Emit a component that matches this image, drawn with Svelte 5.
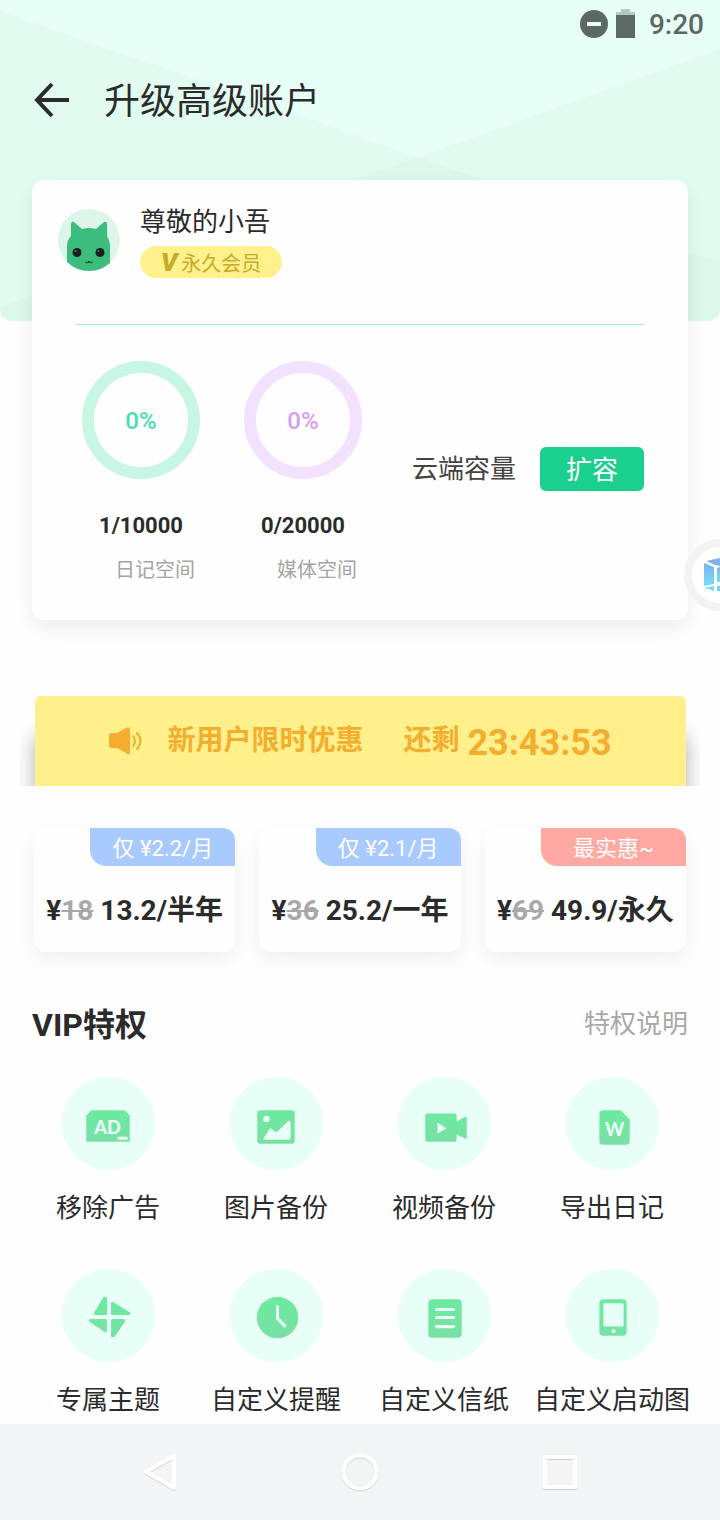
<script>
  const plans = [
    { tag: '仅 ¥2.2/月', old: '18', price: '13.2/半年', hot: false },
    { tag: '仅 ¥2.1/月', old: '36', price: '25.2/一年', hot: false },
    { tag: '最实惠~', old: '69', price: '49.9/永久', hot: true }
  ];
  const usage = [
    { percent: '0%', count: '1/10000', label: '日记空间', kind: 'diary' },
    { percent: '0%', count: '0/20000', label: '媒体空间', kind: 'media' }
  ];
  const perks = [
    { icon: 'ad', label: '移除广告' },
    { icon: 'image', label: '图片备份' },
    { icon: 'video', label: '视频备份' },
    { icon: 'word', label: '导出日记' },
    { icon: 'theme', label: '专属主题' },
    { icon: 'clock', label: '自定义提醒' },
    { icon: 'paper', label: '自定义信纸' },
    { icon: 'phone', label: '自定义启动图' }
  ];
</script>

<div class="page">
  <svg class="backdrop" viewBox="0 0 720 321" preserveAspectRatio="none" aria-hidden="true">
    <rect width="720" height="321" fill="#e8fff8" />
    <path d="M0 11L720 263V321H0Z" fill="#c8eed8" fill-opacity=".22" />
    <path d="M720 49L0 307V321H720Z" fill="#c8eed8" fill-opacity=".22" />
  </svg>

  <header>
    <div class="status">
      <svg width="60" height="32" viewBox="0 0 60 32" aria-hidden="true">
        <circle cx="16" cy="16" r="14" fill="#5c6862" />
        <rect x="9" y="14" width="14" height="4" fill="#e8fff8" />
        <path d="M43 1h9v3h5v3H38V4h5z" fill="#b5c9c0" />
        <path d="M38 7h19v23H38z" fill="#5c6862" />
      </svg>
      <span>9:20</span>
    </div>
    <div class="titlebar">
      <button class="back" aria-label="返回">
        <svg width="36" height="36" viewBox="0 0 36 36" fill="none" stroke="#2b2b2b" stroke-width="4">
          <path d="M19 2L4 18L19 34M4 18H36" />
        </svg>
      </button>
      <h1>升级高级账户</h1>
    </div>
  </header>

  <main>
    <section class="account">
      <div class="user">
        <svg class="avatar" viewBox="0 0 62 62" aria-hidden="true">
          <defs><clipPath id="face"><circle cx="31" cy="31" r="31" /></clipPath></defs>
          <circle cx="31" cy="31" r="31" fill="#e0f5ea" />
          <g clip-path="url(#face)">
            <path d="M9 62V37Q9 31 13 27V15Q13 12 16 13L24 20Q31 18 38 20L46 13Q49 12 49 15V27Q52 32 52 37V62Z" fill="#3dbd7d" />
          </g>
          <circle cx="19" cy="43.500" r="4.500" fill="#17201b" />
          <circle cx="42" cy="43.500" r="4.500" fill="#17201b" />
          <circle cx="17.500" cy="42" r="1" fill="#577" />
          <circle cx="40.500" cy="42" r="1" fill="#577" />
          <path d="M29.500 52h3l-1.500 1.500z" fill="#222" />
          <path d="M27 53q2 2 4 0q2 2 4 0" fill="none" stroke="#222" stroke-width=".8" />
        </svg>
        <div>
          <h2>尊敬的小吾</h2>
          <p class="badge"><b>V</b><span>永久会员</span></p>
        </div>
      </div>
      <div class="storage">
        {#each usage as item}
          <div class="usage {item.kind}">
            <div class="ring">{item.percent}</div>
            <strong>{item.count}</strong>
            <small>{item.label}</small>
          </div>
        {/each}
        <div class="cloud">
          <span>云端容量</span>
          <button>扩容</button>
        </div>
      </div>
    </section>

    <div class="promo-wrap">
      <section class="promo">
        <svg width="34" height="28" viewBox="0 0 34 28" aria-hidden="true">
          <path d="M3 6H8L17 1Q21 -1 21 3V25Q21 29 17 26L8 21H3Q0 21 0 18V9Q0 6 3 6Z" fill="#f4ad2e" />
          <path d="M24 9Q28 14 24 19M28 6Q35 14 28 22" fill="none" stroke="#f4ad2e" stroke-width="2" stroke-linecap="round" />
        </svg>
        <span class="offer">新用户限时优惠</span>
        <span>还剩</span>
        <time>23:43:53</time>
      </section>
    </div>

    <section class="plans">
      {#each plans as plan}
        <button class="plan">
          <span class="tag" class:hot={plan.hot}>{plan.tag}</span>
          <span class="price">¥<del>{plan.old}</del> {plan.price}</span>
        </button>
      {/each}
    </section>

    <div class="heading">
      <h2>VIP特权</h2>
      <a href="#perks">特权说明</a>
    </div>

    <ul class="perks" id="perks">
      {#each perks as perk}
        <li>
          <svg viewBox="0 0 92 92" aria-hidden="true">
            <defs>
              <linearGradient id="g-{perk.icon}" gradientUnits="userSpaceOnUse" x1="0" y1="34" x2="0" y2="70">
                <stop offset="0" stop-color="#6de9a0" />
                <stop offset="1" stop-color="#7adfa5" />
              </linearGradient>
            </defs>
            <circle cx="46" cy="46" r="46" fill="#e8fff8" />
            <g fill="url(#g-{perk.icon})">
              {#if perk.icon === 'ad'}
                <path d="M29 33H62L67 38V64H24V38Z" stroke-linejoin="round" />
                <text x="45" y="56" text-anchor="middle" class="glyph">AD</text>
                <rect x="55" y="59" width="10" height="3" rx="1" fill="#e8fff8" />
              {:else if perk.icon === 'image'}
                <rect x="27" y="33" width="37" height="33" rx="3" />
                <circle cx="36" cy="41.500" r="3.200" fill="#e8fff8" />
                <path d="M33 61L39 52Q40 50 42 52L46 55L57 44Q60 42 60 46V60Q60 62 58 62H34Q33 62 33 61Z" fill="#e8fff8" />
              {:else if perk.icon === 'video'}
                <path d="M29 36H56Q58 36 58 38V44L67 39Q68 39 68 40V60Q68 62 67 61L58 57V62Q58 64 56 64H29Q27 64 27 62V38Q27 36 29 36Z" />
                <path d="M39 45V56L48 51Z" fill="#e8fff8" />
              {:else if perk.icon === 'word'}
                <path d="M37 33H54L63 42V63Q63 67 59 67H37Q33 67 33 63V37Q33 33 37 33Z" />
                <text x="48" y="58" text-anchor="middle" class="glyph">W</text>
              {:else if perk.icon === 'theme'}
                <g stroke="url(#g-theme)" stroke-width="3" stroke-linejoin="round">
                  <path d="M43 29V44H33L42 29Z" />
                  <path d="M50 34V44H66Z" />
                  <path d="M43 61V51H28Z" />
                  <path d="M50 66V51H61L51 66Z" />
                </g>
              {:else if perk.icon === 'clock'}
                <circle cx="47" cy="48" r="20.500" />
                <path d="M47 37V49L54 56" fill="none" stroke="#e8fff8" stroke-width="3" stroke-linecap="round" stroke-linejoin="round" />
              {:else if perk.icon === 'paper'}
                <rect x="30" y="30" width="33" height="38" rx="4" />
                <path d="M38 40H55M38 48H55M38 57H55" stroke="#e8fff8" stroke-width="3" stroke-linecap="round" />
              {:else}
                <rect x="33" y="30" width="27" height="36" rx="4" />
                <rect x="37" y="34" width="20" height="23" rx="1" fill="#e8fff8" />
                <circle cx="47" cy="61.500" r="2" fill="#e8fff8" />
              {/if}
            </g>
          </svg>
          <span>{perk.label}</span>
        </li>
      {/each}
    </ul>
  </main>

  <nav>
    <button aria-label="后退">
      <svg viewBox="0 0 40 40"><path d="M34 4V36L6 20Z" /></svg>
    </button>
    <button aria-label="主页">
      <svg viewBox="0 0 40 40"><circle cx="20" cy="20" r="16.500" /></svg>
    </button>
    <button aria-label="最近任务">
      <svg viewBox="0 0 40 40"><rect x="5" y="5" width="30" height="30" /></svg>
    </button>
  </nav>

  <button class="floating" aria-label="悬浮工具">
    <svg width="72" height="72" viewBox="0 0 72 72">
      <defs>
        <linearGradient id="cube" x1="0" y1="0" x2="0" y2="1">
          <stop offset="0" stop-color="#76b4ee" />
          <stop offset="1" stop-color="#7addf8" />
        </linearGradient>
      </defs>
      <circle cx="36" cy="36" r="32" fill="#fff" stroke="#f3f3f3" stroke-width="8" />
      <path d="M20 24L30 28V45L20 47Z" fill="url(#cube)" />
      <path d="M22 22L36 19L50 22L36 27L31 26Z" fill="#82b2ed" />
      <path d="M33 29L36 28L50 25V44L36 43L33 43Z" fill="url(#cube)" />
      <path d="M20 49L30 47V52L25 50ZM33 47L50 46V48L36 52L33 52Z" fill="#70d9ee" />
    </svg>
  </button>
</div>

<style>
  :global(body) {
    margin: 0;
    background: #fefefe;
  }
  .page {
    position: relative;
    display: flex;
    flex-direction: column;
    min-height: 100vh;
    overflow: hidden;
    font-family: Roboto, "Noto Sans CJK SC", sans-serif;
    color: #2b2b2b;
  }
  h1, h2, p, ul {
    margin: 0;
    padding: 0;
    font-weight: 400;
  }
  button {
    border: 0;
    padding: 0;
    background: none;
    font: inherit;
    color: inherit;
    cursor: pointer;
  }
  svg {
    display: block;
  }
  .backdrop {
    position: absolute;
    top: 0;
    left: 0;
    width: 100%;
    height: 321px;
    border-radius: 0 0 12px 12px;
  }
  header {
    position: relative;
  }
  .status {
    display: flex;
    align-items: center;
    justify-content: flex-end;
    gap: 11px;
    height: 48px;
    padding-right: 16px;
    font-size: 28px;
    font-weight: 500;
    line-height: 32px;
    color: #5c6862;
  }
  .status span {
    padding-top: 2px;
  }
  .titlebar {
    display: flex;
    align-items: center;
    gap: 35px;
    height: 104px;
    padding-left: 33px;
  }
  h1 {
    padding-top: 4px;
    font-size: 36px;
    line-height: 48px;
  }
  main {
    position: relative;
    flex: 1;
    padding: 28px 32px 6px;
  }
  .account {
    padding: 26px 26px 36px;
    border-radius: 12px;
    background: #fefefe;
    box-shadow: 0 8px 20px rgba(0, 0, 0, 0.07);
  }
  .user {
    display: flex;
    gap: 20px;
    height: 118px;
  }
  .avatar {
    width: 62px;
    height: 62px;
    margin-top: 3px;
  }
  .user h2 {
    font-size: 26px;
    line-height: 32px;
  }
  .badge {
    display: flex;
    align-items: center;
    justify-content: center;
    gap: 4px;
    width: 142px;
    height: 32px;
    margin-top: 8px;
    border-radius: 16px;
    background: #fff18c;
    font-size: 20px;
    line-height: 32px;
    color: #c9a92a;
  }
  .badge b {
    font-size: 26px;
    font-style: italic;
    font-weight: 900;
  }
  .badge span {
    padding-top: 4px;
  }
  .storage {
    display: flex;
    margin: 0 18px;
    padding: 36px 0 0 6px;
    border-top: 1px solid #a6e8d0;
  }
  .usage {
    display: flex;
    flex-direction: column;
    align-items: center;
    width: 118px;
    margin-right: 44px;
  }
  .ring {
    display: flex;
    align-items: center;
    justify-content: center;
    box-sizing: border-box;
    width: 118px;
    height: 118px;
    padding-top: 2px;
    border: 12px solid #c7f6e5;
    border-radius: 50%;
    font-size: 24px;
    font-weight: 500;
    color: #4cdcb0;
  }
  .media .ring {
    border-color: #f3e2ff;
    color: #d79df5;
  }
  .usage strong {
    margin-top: 33px;
    font-size: 22px;
    line-height: 28px;
  }
  .usage small {
    margin-top: 16px;
    padding-left: 28px;
    font-size: 20px;
    line-height: 28px;
    color: #a5a5a5;
  }
  .cloud {
    display: flex;
    align-items: center;
    gap: 24px;
    height: 44px;
    margin: 86px 0 0 auto;
    font-size: 26px;
    line-height: 44px;
    color: #444;
    white-space: nowrap;
  }
  .cloud button {
    width: 104px;
    height: 44px;
    border-radius: 6px;
    background: #1bcf8e;
    line-height: 46px;
    color: #fff;
  }
  .promo-wrap {
    margin: 60px -12px 0;
    padding: 16px 14px 0 15px;
    overflow: hidden;
  }
  .promo {
    display: flex;
    align-items: center;
    justify-content: center;
    height: 90px;
    border-radius: 6px 6px 0 0;
    background: #fff08b;
    box-shadow: 0 40px 20px rgba(0, 0, 0, 0.32);
    font-size: 28px;
    font-weight: 700;
    line-height: 40px;
    color: #f4ad2e;
    white-space: nowrap;
  }
  .offer {
    margin: 0 40px 0 24px;
  }
  .promo time {
    margin-left: 8px;
    padding-top: 4px;
    font-size: 36px;
  }
  .plans {
    display: grid;
    grid-template-columns: repeat(3, 1fr);
    gap: 24px;
    margin: 26px -12px 0;
    padding: 16px 14px 17px;
    overflow: hidden;
  }
  .plan {
    display: flex;
    flex-direction: column;
    align-items: center;
    height: 124px;
    border-radius: 12px;
    background: #fefefe;
    box-shadow: 0 8px 20px rgba(0, 0, 0, 0.06);
  }
  .tag {
    align-self: flex-end;
    width: 72%;
    height: 38px;
    border-radius: 0 12px 0 16px;
    background: #a9caff;
    font-size: 22px;
    line-height: 42px;
    color: #fff;
  }
  .tag.hot {
    background: #ffa9a2;
  }
  .price {
    margin-top: 25px;
    font-size: 28px;
    font-weight: 700;
    line-height: 40px;
    white-space: nowrap;
  }
  del {
    color: #a8a8a8;
  }
  .heading {
    display: flex;
    align-items: center;
    justify-content: space-between;
    height: 48px;
    margin-top: 31px;
  }
  .heading h2 {
    padding-top: 2px;
    font-size: 32px;
    font-weight: 700;
    line-height: 48px;
  }
  .heading a {
    font-size: 26px;
    line-height: 48px;
    color: #a8a8a8;
    text-decoration: none;
  }
  .perks {
    display: grid;
    grid-template-columns: repeat(4, 1fr);
    gap: 43px 0;
    margin: 29px -8px 0;
    list-style: none;
  }
  .perks li {
    display: flex;
    flex-direction: column;
    align-items: center;
    gap: 20px;
    font-size: 26px;
    line-height: 36px;
    white-space: nowrap;
  }
  .perks svg {
    width: 93px;
    height: 93px;
  }
  .glyph {
    font-family: Lato, sans-serif;
    font-size: 18px;
    font-weight: 900;
    fill: #e8fff8;
  }
  nav {
    position: relative;
    display: flex;
    align-items: center;
    justify-content: center;
    gap: 160px;
    height: 96px;
    background: #f3f4f6;
  }
  nav svg {
    width: 40px;
    height: 40px;
    fill: none;
    stroke: #fff;
    stroke-width: 4;
    stroke-linejoin: round;
    filter: drop-shadow(0 1px 0 rgba(0, 0, 0, 0.14));
  }
  .floating {
    position: absolute;
    top: 539px;
    right: -36px;
  }
</style>
